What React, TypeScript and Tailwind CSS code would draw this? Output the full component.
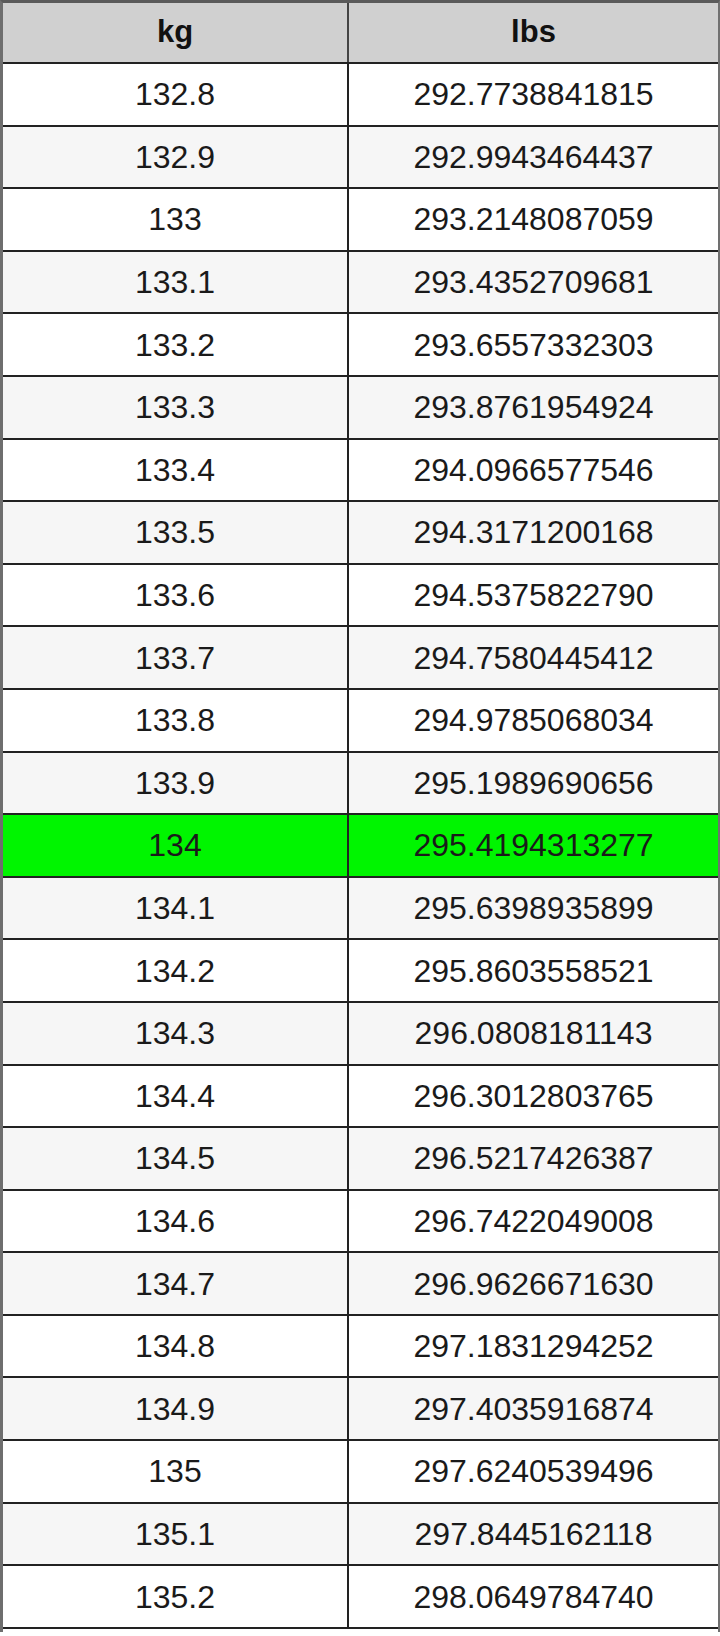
import React from "react";

const rows: [string, string][] = [
  ["132.8", "292.7738841815"],
  ["132.9", "292.9943464437"],
  ["133", "293.2148087059"],
  ["133.1", "293.4352709681"],
  ["133.2", "293.6557332303"],
  ["133.3", "293.8761954924"],
  ["133.4", "294.0966577546"],
  ["133.5", "294.3171200168"],
  ["133.6", "294.5375822790"],
  ["133.7", "294.7580445412"],
  ["133.8", "294.9785068034"],
  ["133.9", "295.1989690656"],
  ["134", "295.4194313277"],
  ["134.1", "295.6398935899"],
  ["134.2", "295.8603558521"],
  ["134.3", "296.0808181143"],
  ["134.4", "296.3012803765"],
  ["134.5", "296.5217426387"],
  ["134.6", "296.7422049008"],
  ["134.7", "296.9626671630"],
  ["134.8", "297.1831294252"],
  ["134.9", "297.4035916874"],
  ["135", "297.6240539496"],
  ["135.1", "297.8445162118"],
  ["135.2", "298.0649784740"],
];

export default function App() {
  return (
    <div
      className="w-[720px] h-[1636px] bg-white overflow-hidden"
      style={{ fontFamily: '"Liberation Sans", Arial, sans-serif' }}
    >
      <div className="border-t-[3px] border-l-[3px] border-r-[2px] border-t-[#5a5a5a] border-l-[#6e6e6e] border-r-[#707070] h-[1632px]">
        <div className="flex h-[61px] bg-[#d0d0d0] border-b-2 border-[#222]">
          <div className="w-[346px] border-r-2 border-[#444] flex items-center justify-center text-[31px] font-bold text-[#111]">
            kg
          </div>
          <div className="flex-1 flex items-center justify-center text-[31px] font-bold text-[#111]">
            lbs
          </div>
        </div>
        {rows.map(([kg, lbs], i) => {
          const hi = i === 12;
          const bg = hi ? "bg-[#00f500]" : i % 2 === 1 ? "bg-[#f6f6f6]" : "bg-white";
          return (
            <div
              key={kg}
              className={`flex h-[62.6px] border-b-2 border-[#222] ${bg}`}
            >
              <div className="w-[346px] border-r-2 border-[#222] flex items-center justify-center text-[32px] text-[#1a1a1a]">
                {kg}
              </div>
              <div className="flex-1 flex items-center justify-center text-[32px] text-[#1a1a1a]">
                {lbs}
              </div>
            </div>
          );
        })}
      </div>
    </div>
  );
}
